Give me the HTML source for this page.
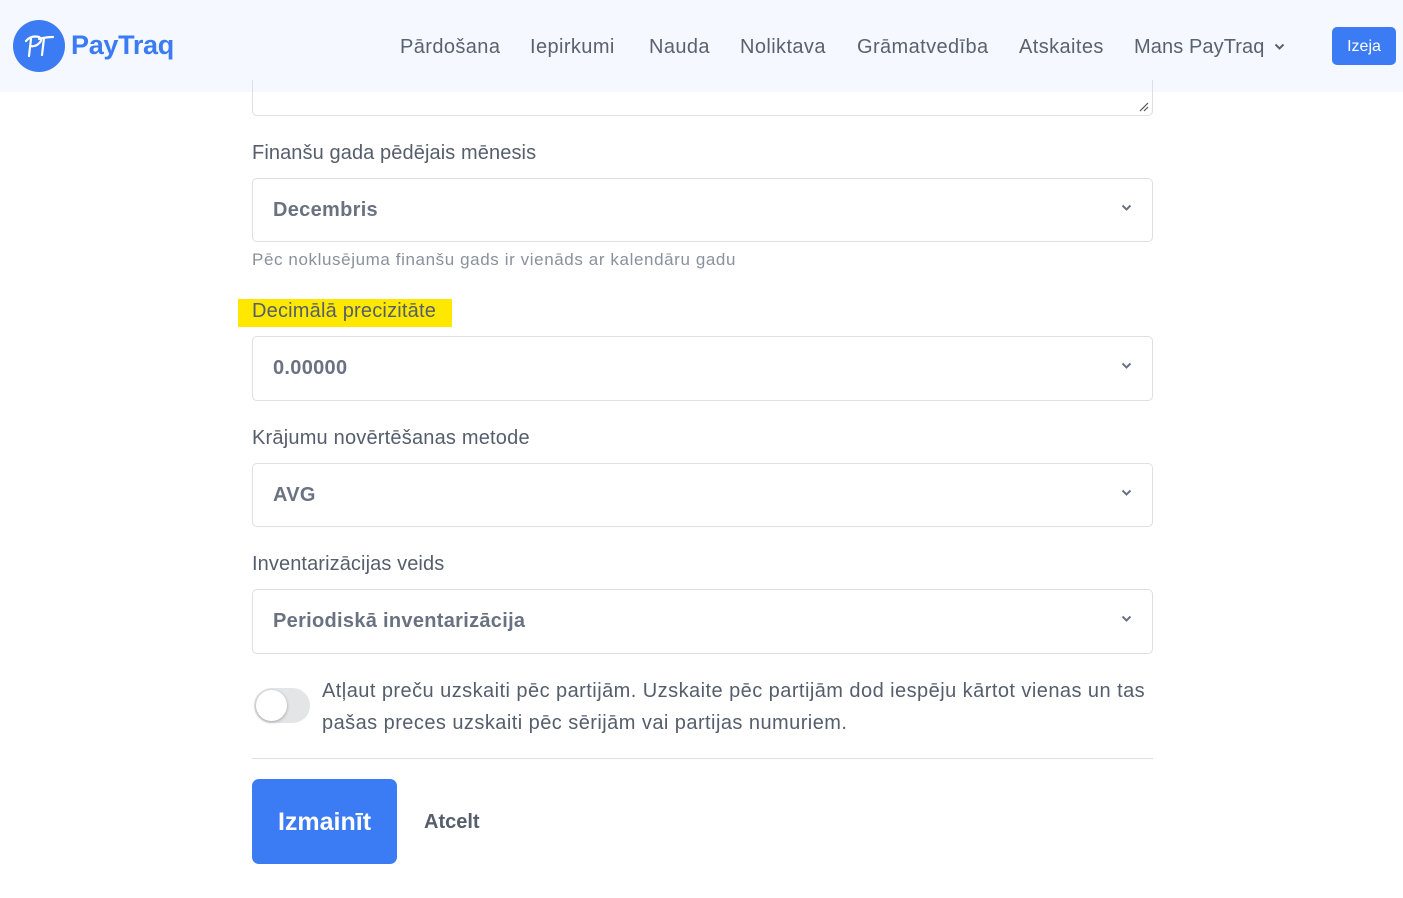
<!DOCTYPE html>
<html><head><meta charset="utf-8"><style>
*{margin:0;padding:0;box-sizing:border-box}
body{width:1403px;height:898px;background:#fff;font-family:"Liberation Sans",sans-serif;color:#555e6c;position:relative;overflow:hidden}
.a{position:absolute;white-space:nowrap}
.hdr{position:absolute;left:0;top:0;width:1403px;height:92px;background:#f5f8fe}
.nav{font-size:20px;top:36px;color:#5a6270;letter-spacing:0.4px}
.lbl{font-size:20px;color:#555e6c;letter-spacing:0.3px;left:252px}
.sel{position:absolute;left:252px;width:901px;height:64px;border:1px solid #dcdfe4;border-radius:5px}
.sel span{position:absolute;left:20px;top:20px;font-size:20px;font-weight:bold;color:#6a7282;letter-spacing:0.3px}
.sel svg{position:absolute;right:20px;top:25px}
</style></head><body>
<div class="hdr"></div>
<svg class="a" style="left:13px;top:20px" width="52" height="52" viewBox="0 0 52 52"><circle cx="26" cy="26" r="26" fill="#3b7cf4"/><path d="M13 21 Q18 15 26 17 Q31 20 24 25 Q20 27 18 26 M18 19 L16 36 M26 19 Q33 17 40 17 M31 18 L29 35" stroke="#fff" stroke-width="2.2" fill="none" stroke-linecap="round"/></svg>
<div class="a" style="left:71px;top:30px;font-size:27px;font-weight:bold;color:#3b7cf4;letter-spacing:-0.3px">PayTraq</div>
<div class="a nav" style="left:400px">Pārdošana</div>
<div class="a nav" style="left:530px">Iepirkumi</div>
<div class="a nav" style="left:649px">Nauda</div>
<div class="a nav" style="left:740px">Noliktava</div>
<div class="a nav" style="left:857px">Grāmatvedība</div>
<div class="a nav" style="left:1019px">Atskaites</div>
<div class="a nav" style="left:1134px;letter-spacing:0.1px">Mans PayTraq</div>
<svg class="a" style="left:1274px;top:43px" width="11" height="8" viewBox="0 0 11 8"><path d="M1.5 1.5 L5.5 5.5 L9.5 1.5" stroke="#5a6270" stroke-width="2" fill="none"/></svg>
<div class="a" style="left:1332px;top:27px;width:64px;height:38px;background:#3b7cf4;border-radius:5px;color:#fff;font-size:16px;text-align:center;line-height:40px">Izeja</div>

<div style="position:absolute;left:252px;top:80px;width:901px;height:36px;border:1px solid #dcdfe4;border-top:none;border-radius:0 0 5px 5px"></div>
<svg class="a" style="left:1138px;top:101px" width="11" height="11"><path d="M2 10 L10 2 M6 10 L10 6" stroke="#555" stroke-width="1.2"/></svg>
<div class="hdr" style="z-index:1;background:transparent"></div>

<div class="a lbl" style="top:142px;letter-spacing:0.1px">Finanšu gada pēdējais mēnesis</div>
<div class="sel" style="top:178px"><span>Decembris</span><svg width="11" height="8"><path d="M1.5 1.5 L5.5 5.5 L9.5 1.5" stroke="#6a7282" stroke-width="2" fill="none"/></svg></div>
<div class="a" style="left:252px;top:250px;font-size:17px;color:#8a919c;letter-spacing:0.6px">Pēc noklusējuma finanšu gads ir vienāds ar kalendāru gadu</div>

<div class="a" style="left:238px;top:299px;width:214px;height:28px;background:#ffe800"></div>
<div class="a lbl" style="top:300px;letter-spacing:0.2px">Decimālā precizitāte</div>
<div class="sel" style="top:336px;height:65px"><span>0.00000</span><svg width="11" height="8"><path d="M1.5 1.5 L5.5 5.5 L9.5 1.5" stroke="#6a7282" stroke-width="2" fill="none"/></svg></div>

<div class="a lbl" style="top:427px;letter-spacing:0.2px">Krājumu novērtēšanas metode</div>
<div class="sel" style="top:463px"><span>AVG</span><svg width="11" height="8"><path d="M1.5 1.5 L5.5 5.5 L9.5 1.5" stroke="#6a7282" stroke-width="2" fill="none"/></svg></div>

<div class="a lbl" style="top:553px;letter-spacing:0.1px">Inventarizācijas veids</div>
<div class="sel" style="top:589px;height:65px"><span>Periodiskā inventarizācija</span><svg width="11" height="8"><path d="M1.5 1.5 L5.5 5.5 L9.5 1.5" stroke="#6a7282" stroke-width="2" fill="none"/></svg></div>

<div class="a" style="left:254px;top:688px;width:56px;height:35px;border-radius:18px;background:#e4e5e7"></div>
<div class="a" style="left:256px;top:690px;width:31px;height:31px;border-radius:50%;background:#fff;box-shadow:0 1px 3px rgba(0,0,0,.3)"></div>
<div class="a" style="left:322px;top:675px;font-size:20px;line-height:32px;letter-spacing:0.45px;color:#555e6c">Atļaut preču uzskaiti pēc partijām. Uzskaite pēc partijām dod iespēju kārtot vienas un tas<br>pašas preces uzskaiti pēc sērijām vai partijas numuriem.</div>
<div class="a" style="left:252px;top:758px;width:901px;height:1px;background:#dcdfe4"></div>

<div class="a" style="left:252px;top:779px;width:145px;height:85px;background:#3b7cf4;border-radius:7px;color:#fff;font-size:25px;font-weight:bold;text-align:center;line-height:87px">Izmainīt</div>
<div class="a" style="left:424px;top:811px;font-size:20px;font-weight:bold;color:#555e6c">Atcelt</div>
</body></html>
